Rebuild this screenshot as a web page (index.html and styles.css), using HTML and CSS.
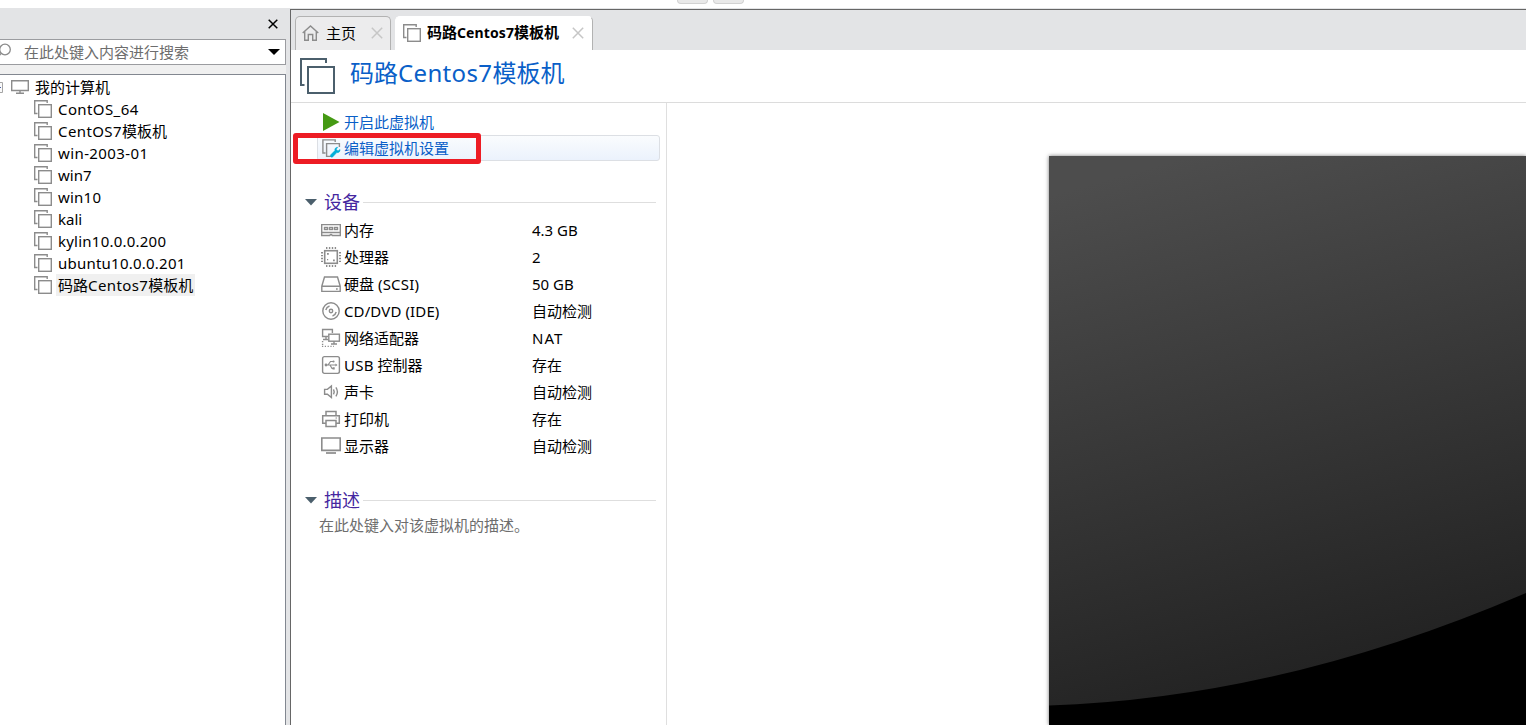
FILE: index.html
```html
<!DOCTYPE html>
<html lang="zh-CN">
<head>
<meta charset="utf-8">
<title>码路Centos7模板机</title>
<link rel="stylesheet" href="styles.css">
</head>
<body>
<svg class="defs" aria-hidden="true">
  <symbol id="vm" viewBox="0 0 18 18"><path d="M3.500 13.500H.7V.7h12.500V3" fill="none" stroke="#8c8c8c" stroke-width="1.400"/><rect x="4.700" y="4.700" width="12.600" height="12.600" fill="#fff" stroke="#8c8c8c" stroke-width="1.400"/></symbol>
  <symbol id="close" viewBox="0 0 12 12"><path d="M.8.8l10.400 10.400M11.200.8L.8 11.200" fill="none" stroke="#c6c6c6" stroke-width="1.500"/></symbol>
</svg>
<div class="toolbar"><span class="tool"></span><span class="tool"></span></div>
<div class="window">
  <aside class="sidebar">
    <div class="side-head"><svg width="10" height="10" viewBox="0 0 10 10"><path d="M.7.7l8.600 8.600M9.300.7L.7 9.300" stroke="#000" stroke-width="1.500"/></svg></div>
    <div class="search">
      <svg class="lens" width="13" height="16" viewBox="0 0 13 16"><circle cx="6" cy="6.500" r="5.300" fill="none" stroke="#8a8a8a" stroke-width="1.300"/><path d="M2.200 10.300L0 13" stroke="#8a8a8a" stroke-width="1.300"/></svg>
      <span class="placeholder">在此处键入内容进行搜索</span>
      <svg class="caret" width="12" height="6" viewBox="0 0 12 6"><path d="M0 0h12L6 6z"/></svg>
    </div>
    <div class="tree">
      <div class="root">
        <svg class="expander" width="3" height="11" viewBox="0 0 3 11"><path d="M0 .5h2.500v10H0" fill="#fafafa" stroke="#a5a5a5"/><path d="M0 5.500h1" stroke="#4a5ea8"/></svg>
        <svg class="pc" width="18" height="14" viewBox="0 0 18 14"><path d="M.7.7h16.600v9.800H.7zM9 10.500v2.500M5 13.300h8" fill="none" stroke="#8c8c8c" stroke-width="1.400"/></svg>
        <span>我的计算机</span>
      </div>
      <div class="node"><svg class="vm"><use href="#vm"/></svg><span class="wide">ContOS_64</span></div>
      <div class="node"><svg class="vm"><use href="#vm"/></svg><span><i class="wide">CentOS7</i>模板机</span></div>
      <div class="node"><svg class="vm"><use href="#vm"/></svg><span class="wide">win-2003-01</span></div>
      <div class="node"><svg class="vm"><use href="#vm"/></svg><span>win7</span></div>
      <div class="node"><svg class="vm"><use href="#vm"/></svg><span class="mid">win10</span></div>
      <div class="node"><svg class="vm"><use href="#vm"/></svg><span>kali</span></div>
      <div class="node"><svg class="vm"><use href="#vm"/></svg><span class="mid">kylin10.0.0.200</span></div>
      <div class="node"><svg class="vm"><use href="#vm"/></svg><span class="mid">ubuntu10.0.0.201</span></div>
      <div class="node selected"><svg class="vm"><use href="#vm"/></svg><span>码路<i class="wide">Centos7</i>模板机</span></div>
    </div>
  </aside>
  <main class="main">
    <nav class="tabs">
      <div class="tab home">
        <svg width="17" height="16" viewBox="0 0 17 16"><path d="M.7 8L8.500 1l7.800 7M2.700 6.500v8.800h3.600V9.500h4.400v5.800h3.600V6.500" fill="none" stroke="#8c8c8c" stroke-width="1.400"/></svg>
        <span>主页</span><svg class="x"><use href="#close"/></svg>
      </div>
      <div class="tab active">
        <svg class="vm"><use href="#vm"/></svg>
        <span>码路<i>Centos7</i>模板机</span><svg class="x"><use href="#close"/></svg>
      </div>
    </nav>
    <header class="title">
      <svg width="36" height="36" viewBox="0 0 36 36"><path d="M5.500 27H2V1h25v4" fill="none" stroke="#4b5f6c" stroke-width="2"/><rect x="9" y="9" width="26" height="26" fill="#fff" stroke="#4b5f6c" stroke-width="2"/></svg>
      <h1>码路<i>Centos7</i>模板机</h1>
    </header>
    <div class="content">
      <section class="panel">
        <div class="actions">
          <div class="action"><svg width="17" height="18" viewBox="0 0 17 18"><path d="M0 0l16.500 9L0 18z" fill="#459a13"/></svg><span>开启此虚拟机</span></div>
          <div class="action hover"><svg width="19" height="19" viewBox="0 0 19 19"><path d="M3.500 14H.9V.9h12.300V3M9 17.400H4.600V4.600h12.800V8" fill="none" stroke="#8c8c8c" stroke-width="1.400"/><path d="M8.700 15.800l4.200-4.200c-.4-1.800.8-3.500 2.900-3.300l-1.600 1.900 1.800 1.700 2-1.500c.4 2.200-1.300 3.600-3.200 3.200L10.600 18c-1.300.9-2.800-.8-1.900-2.200z" fill="#00aed8" stroke="#00aed8" stroke-width=".5"/></svg><span>编辑虚拟机设置</span><b class="mark"></b></div>
        </div>
        <h2><svg width="12" height="7" viewBox="0 0 12 7"><path d="M0 0h12L6 6.500z" fill="#4b5f6c"/></svg><span>设备</span></h2>
        <dl class="devices">
          <dt><svg viewBox="0 0 20 20"><g fill="none" stroke="#8c8c8c" stroke-width="1.400"><path d="M.7 15.500V4.600h18.600v10.900"/><rect x="3.500" y="7.500" width="3" height="2"/><rect x="8.500" y="7.500" width="3" height="2"/><rect x="13.500" y="7.500" width="3" height="2"/><path d="M0 12.500h20M0 15.500h8.700q1.300-2 2.600 0H20"/></g></svg><span>内存</span></dt><dd>4.3 GB</dd>
          <dt><svg viewBox="0 0 20 20"><g fill="none" stroke="#8c8c8c"><rect x="3.700" y="3.700" width="12.600" height="12.600" stroke-width="1.600"/><path d="M5 1h11M5 19h11" stroke-width="2" stroke-dasharray="1.400 1.500"/><path d="M1 5v11M19 5v11" stroke-width="2" stroke-dasharray="1.400 1.500"/></g><path d="M6 6h1.800v1.800H6zM12 12.500h1.800v1.800H12zM6 12h1.200v1.200H6z" fill="#8c8c8c"/></svg><span>处理器</span></dt><dd>2</dd>
          <dt><svg viewBox="0 0 20 20"><g fill="none" stroke="#8c8c8c" stroke-width="1.400"><path d="M.8 12.200L3.500 3h13l2.700 9.200v5.200H.8zM.8 12.200h18.400"/><path d="M15 15h1.700"/></g></svg><span>硬盘 <i class="mid">(SCSI)</i></span></dt><dd>50 GB</dd>
          <dt><svg viewBox="0 0 20 20"><g fill="none" stroke="#8c8c8c" stroke-width="1.400"><circle cx="10" cy="10" r="8.200"/><circle cx="10" cy="10" r="1.700"/><path d="M4.800 9Q5.500 6 8.500 5M15.200 11q-.7 3-3.700 4"/></g></svg><span class="slight">CD/DVD (IDE)</span></dt><dd>自动检测</dd>
          <dt><svg viewBox="0 0 20 20"><g fill="none" stroke="#8c8c8c" stroke-width="1.400"><path d="M7 8.500H1.600v-7h9.800v3.500M5 8.500v3M2 11.500h5"/><rect x="7.800" y="6.200" width="10.600" height="7"/><path d="M13 13v3M10 16h6"/><path d="M1.600 13v6M1 18.400h12" stroke-dasharray="1.200 1.600"/></g></svg><span>网络适配器</span></dt><dd class="nat">NAT</dd>
          <dt><svg viewBox="0 0 20 20"><rect x="1.600" y="1.600" width="16.800" height="16.800" rx="1.800" fill="none" stroke="#8c8c8c" stroke-width="1.400"/><g fill="none" stroke="#8c8c8c" stroke-width="1.200"><path d="M5 10h10M7 10l2.500-3.500H12M9 10l2 3.500h2"/></g><g fill="#8c8c8c"><circle cx="5" cy="10" r="1.400"/><circle cx="12.500" cy="6.500" r="1.100"/><path d="M11.500 12.300h2.200v2.200h-2.200zM14.500 8.500v3l2-1.500z"/></g></svg><span><i class="mid">USB</i> 控制器</span></dt><dd>存在</dd>
          <dt><svg viewBox="0 0 20 20"><path d="M3.600 7.400h2.800L10.400 4v11.600l-4-3.300H3.600zM12.500 7.300q1.400 2.500 0 5M14.900 5.300q3 4.500 0 9" fill="none" stroke="#8c8c8c" stroke-width="1.400"/></svg><span>声卡</span></dt><dd>自动检测</dd>
          <dt><svg viewBox="0 0 20 20"><path d="M5 6.500V2.400h10v4.100M5 14.200H1.700V6.800h16.600v7.400H15M5 11.500h10v6H5z" fill="none" stroke="#8c8c8c" stroke-width="1.500"/><path d="M14.500 9h1.500" stroke="#8c8c8c"/></svg><span>打印机</span></dt><dd>存在</dd>
          <dt><svg viewBox="0 0 20 20"><path d="M.8 2h18.400v12.400H.8z" fill="none" stroke="#8c8c8c" stroke-width="1.600"/><path d="M5 17h10" stroke="#8c8c8c" stroke-width="1.700"/></svg><span>显示器</span></dt><dd>自动检测</dd>
        </dl>
        <h2><svg width="12" height="7" viewBox="0 0 12 7"><path d="M0 0h12L6 6.500z" fill="#4b5f6c"/></svg><span>描述</span></h2>
        <p class="desc">在此处键入对该虚拟机的描述。</p>
      </section>
      <section class="preview">
        <svg class="screen" viewBox="0 0 477 569">
          <defs><linearGradient id="g" gradientUnits="userSpaceOnUse" x1="10" y1="37" x2="156" y2="557"><stop offset="0" stop-color="#4d4d4d"/><stop offset="1" stop-color="#222"/></linearGradient></defs>
          <path d="M0 0h477v569H0z"/><path d="M0 0h477v437Q233 542 0 549.500z" fill="url(#g)"/>
        </svg>
      </section>
    </div>
  </main>
</div>
</body>
</html>
```

FILE: styles.css
```css
* { box-sizing: border-box; }
body { margin: 0; width: 1526px; height: 725px; overflow: hidden; background: #fff; color: #000; font: 15px/22px "Noto Sans", "Noto Sans CJK SC", sans-serif; display: flex; flex-direction: column; }
svg { display: block; flex: none; }
i { font-style: normal; }
span, dd, h1 { white-space: nowrap; }
.defs { position: absolute; width: 0; height: 0; }
.vm { width: 18px; height: 18px; }
.slight { letter-spacing: .12px; }
.mid { letter-spacing: .23px; }
.wide { letter-spacing: .4px; }
.nat { letter-spacing: 1px; }

.toolbar { height: 8px; flex: none; display: flex; gap: 5px; padding-left: 677px; }
.tool { width: 31px; height: 4px; background: #e9e9e9; border: 1px solid #d2d2d2; border-top: 0; border-radius: 0 0 4px 4px; }
.window { flex: 1; min-height: 0; display: flex; background: #e3e4e6; }

.sidebar { width: 290px; flex: none; display: flex; flex-direction: column; padding-right: 4px; }
.side-head { height: 31px; flex: none; display: flex; justify-content: flex-end; padding: 11px 8px 0 0; }
.search { height: 26px; flex: none; background: #fff; border: 1px solid #9b9ca0; border-left: 0; display: flex; align-items: center; }
.lens { margin: -2px 12px 0 -1px; }
.placeholder { flex: 1; color: #6d6d6d; }
.caret { margin-right: 5px; }
.tree { margin-top: 9px; flex: 1; background: #fff; border: solid #828790; border-width: 1px 1px 0 0; padding-top: 1px; box-shadow: 0 -9px #f0f0f0; }
.root, .node { height: 22px; display: flex; align-items: center; }
.pc { margin: 0 6px 0 8px; }
.node { padding-left: 34px; gap: 4px; }
.node span { padding: 0 2px; line-height: 22px; }
.selected span { background: #f0f0f0; }

.main { flex: 1; min-width: 0; margin-top: 1px; border: solid #666; border-width: 1px 0 0 1px; background: #fff; display: flex; flex-direction: column; }
.tabs { height: 40px; flex: none; background: #e3e4e6; display: flex; align-items: flex-end; gap: 4px; padding-left: 4px; }
.tab { height: 34px; display: flex; align-items: center; border: 1px solid #b2b2b2; border-bottom: 0; border-radius: 5px 5px 0 0; padding-bottom: 2px; }
.home { width: 96px; background: #ececed; padding-left: 6px; }
.home span { margin: 0 15px 0 7px; }
.active { width: 198px; background: #fff; border-left-color: #fff; border-top-color: #fff; padding-left: 7px; }
.active span { font-weight: 700; margin: 0 13px 0 6px; }
.active i { font-size: 14px; letter-spacing: .1px; }
.x { width: 12px; height: 12px; }
.title { height: 53px; flex: none; border-bottom: 1px solid #dcdcdc; display: flex; align-items: center; padding-left: 8px; gap: 15px; }
h1 { margin: 0; font-size: 24px; line-height: 32px; font-weight: 400; color: #0a5fc8; padding-bottom: 7px; }
h1 i { letter-spacing: .35px; }

.content { flex: 1; min-height: 0; display: flex; }
.panel { width: 376px; flex: none; border-right: 1px solid #dfdfdf; padding: 6px 10px 0 14px; }
.actions { height: 79px; margin: 0 -4px 0 12px; color: #0a5fc8; }
.action { height: 26px; display: flex; align-items: center; border: 1px solid transparent; border-radius: 3px; padding-left: 5px; gap: 4px; position: relative; }
.hover { background: linear-gradient(#fafcfe, #ebf2fc); border-color: #dcdfe4; padding-left: 4px; gap: 3px; }
.mark { position: absolute; left: -25px; top: -3px; width: 188px; height: 31px; border: 5px solid #ed1c24; border-radius: 3px; }
h2 { margin: 0; height: 28px; display: flex; align-items: center; font-size: 18px; font-weight: 400; color: #4527a0; }
h2 span { margin: 0 3px 0 7px; }
h2::after { content: ""; flex: 1; height: 1px; background: #dedede; }
.devices { margin: 0; padding-left: 16px; display: grid; grid-template-columns: 211px 1fr; grid-auto-rows: 27px; align-items: center; height: 270px; }
dt { display: flex; align-items: center; gap: 3px; }
dt svg { width: 20px; height: 20px; }
dd { margin: 0; }
.desc { margin: 0; padding-left: 14px; color: #6d6d6d; }
.preview { flex: 1; padding: 53px 0 0 382px; overflow: hidden; }
.screen { width: 477px; height: 569px; box-shadow: 0 0 4px rgba(0,0,0,.55); }
```
